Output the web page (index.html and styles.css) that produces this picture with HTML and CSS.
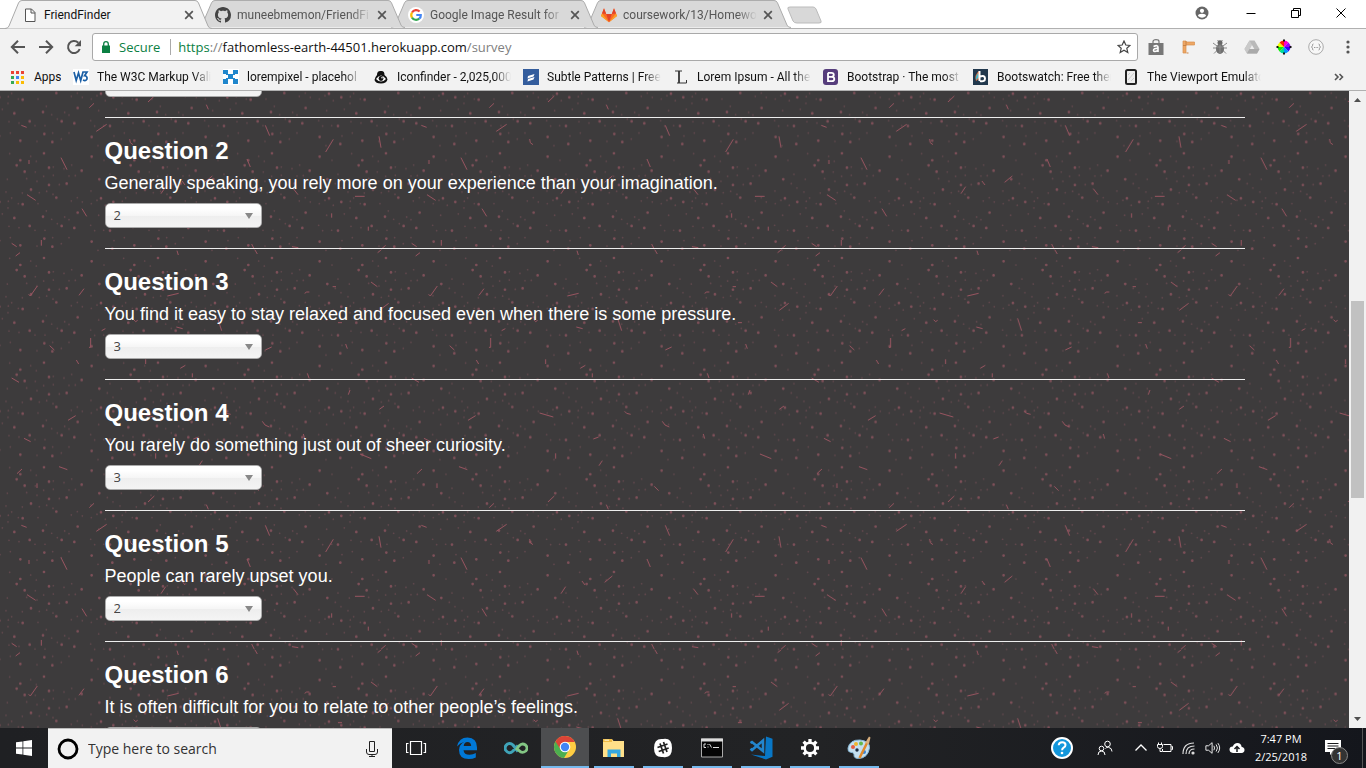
FILE: index.html
```html
<!DOCTYPE html>
<html lang="en">
<head>
<meta charset="utf-8">
<title>FriendFinder</title>
<link rel="stylesheet" href="styles.css">
</head>
<body>
<svg class="defs" aria-hidden="true">
  <defs>
    <symbol id="tab-shape" viewBox="0 0 207 29" preserveAspectRatio="none"><path d="M0 28.5Q3 28.500 4 26L13.500 3Q14.500 .5 17 .5H190Q192.500 .5 193.500 3L203 26Q204 28.500 207 28.500"/></symbol>
    <symbol id="x" viewBox="0 0 10 10"><path d="M1.200 1.200l7.600 7.600M8.800 1.200L1.200 8.800" fill="none" stroke="#555" stroke-width="1.700"/></symbol>
    <symbol id="caret" viewBox="0 0 8 6"><path d="M0 0h8L4 6z" fill="#888"/></symbol>
  </defs>
</svg>
<div class="desktop">
<header class="browser">
  <div class="tabstrip">
    <div class="tab active"><svg class="shape"><use href="#tab-shape"/></svg>
      <svg class="favicon" viewBox="0 0 16 16"><path d="M3.500 2h6l3.500 3.500V14.500H3.500zM9 2v4h4" fill="#fff" stroke="#555"/></svg>
      <span class="tab-title">FriendFinder</span><button class="plain" aria-label="Close tab"><svg class="close"><use href="#x"/></svg></button></div>
    <div class="tab"><svg class="shape"><use href="#tab-shape"/></svg>
      <svg class="favicon" viewBox="0 0 16 16"><path fill="#444" d="M8 0C3.580 0 0 3.580 0 8c0 3.540 2.290 6.530 5.470 7.590.4.070.55-.17.55-.38 0-.19-.01-.82-.01-1.490-2.010.37-2.530-.49-2.690-.94-.09-.23-.48-.94-.82-1.130-.28-.15-.68-.52-.01-.53.63-.01 1.080.58 1.230.82.72 1.210 1.870.87 2.330.66.07-.52.28-.87.51-1.070-1.780-.2-3.640-.89-3.640-3.950 0-.87.31-1.590.82-2.150-.08-.2-.36-1.020.08-2.120 0 0 .67-.21 2.200.82.64-.18 1.320-.27 2-.27s1.360.09 2 .27c1.530-1.040 2.200-.82 2.200-.82.44 1.100.16 1.920.08 2.120.51.56.82 1.270.82 2.150 0 3.070-1.870 3.750-3.650 3.950.29.25.54.73.54 1.480 0 1.070-.01 1.930-.01 2.200 0 .21.15.46.55.38A8.010 8.010 0 0016 8c0-4.420-3.580-8-8-8z"/></svg>
      <span class="tab-title">muneebmemon/FriendFi</span><button class="plain" aria-label="Close tab"><svg class="close"><use href="#x"/></svg></button></div>
    <div class="tab"><svg class="shape"><use href="#tab-shape"/></svg>
      <svg class="favicon" viewBox="0 0 16 16"><circle cx="8" cy="8" r="8" fill="#fff"/><g fill="none" stroke-width="2.200"><path d="M4 5.500A4.900 4.900 0 0 1 11.600 4.500" stroke="#ea4335"/><path d="M4 5.500A4.900 4.900 0 0 0 4 10.600" stroke="#fbbc05"/><path d="M4 10.600A4.900 4.900 0 0 0 11.200 11.700" stroke="#34a853"/><path d="M11.200 11.700Q13 10.300 12.800 8H8.300" stroke="#4285f4"/></g></svg>
      <span class="tab-title">Google Image Result for</span><button class="plain" aria-label="Close tab"><svg class="close"><use href="#x"/></svg></button></div>
    <div class="tab"><svg class="shape"><use href="#tab-shape"/></svg>
      <svg class="favicon" viewBox="0 0 16 16"><path fill="#fc6d26" d="M0 9L3 1.200 5.200 7h5.600L13 1.200 16 9l-8 6.200z"/><path fill="#e24329" d="M8 15.200L5.200 7h5.600z"/><path fill="#fca326" d="M0 9l1-2.500 7 8.700zM16 9l-1-2.500-7 8.700z"/><path fill="#e24329" d="M1 6.500L3 1.200l2.200 5.800zM15 6.500l-2-5.300L10.800 7z"/></svg>
      <span class="tab-title">coursework/13/Homewo</span><button class="plain" aria-label="Close tab"><svg class="close"><use href="#x"/></svg></button></div>
    <button class="plain newtab" aria-label="New tab"><svg viewBox="0 0 36 18"><path d="M3 1h23q2 0 3 2l5 12q1 2-2 2H10q-3 0-4-2L1 3q-1-2 2-2z" fill="#d8d8d8" stroke="#bbb"/></svg></button>
    <div class="window-controls">
      <button class="plain" aria-label="Profile"><svg viewBox="0 0 14 14"><circle cx="7" cy="7" r="6.500" fill="#666"/><circle cx="7" cy="4.800" r="2.100" fill="#fff"/><path d="M3 10q0-2.300 4-2.300T11 10q-4 3.500-8 0z" fill="#fff"/></svg></button>
      <button class="plain" aria-label="Minimize"><svg viewBox="0 0 14 14"><path d="M2.500 7.500h9" stroke="#000"/></svg></button>
      <button class="plain" aria-label="Restore"><svg viewBox="0 0 14 14"><path d="M2.500 4.500h7v7h-7zM4.500 4.500v-2h7v7h-2" fill="none" stroke="#000"/></svg></button>
      <button class="plain" aria-label="Close"><svg viewBox="0 0 14 14"><path d="M2.500 2.500l9 9M11.500 2.500l-9 9" stroke="#000"/></svg></button>
    </div>
  </div>
  <div class="toolbar">
    <div class="nav">
      <button class="plain" aria-label="Back"><svg viewBox="0 0 16 16"><path d="M15 8H2.500M8 1.700L1.800 8 8 14.300" fill="none" stroke="#555" stroke-width="2"/></svg></button>
      <button class="plain" aria-label="Forward"><svg viewBox="0 0 16 16"><path d="M1 8h12.500M8 1.700L14.200 8 8 14.300" fill="none" stroke="#555" stroke-width="2"/></svg></button>
      <button class="plain" aria-label="Reload"><svg viewBox="0 0 16 16"><path d="M13.700 10A6 6 0 1 1 12.300 3.800" fill="none" stroke="#555" stroke-width="2"/><path d="M15 1v6.300H8.700z" fill="#555"/></svg></button>
    </div>
    <div class="omnibox">
      <svg class="lock" viewBox="0 0 8 12"><path d="M0 4.500h8V12H0z" fill="#0b8043"/><path d="M1.700 5V3a2.300 2.300 0 0 1 4.600 0v2" fill="none" stroke="#0b8043" stroke-width="1.300"/></svg>
      <span class="secure">Secure</span>
      <a class="url" href="#survey"><span class="scheme">https</span><span class="dim">://</span>fathomless-earth-44501.herokuapp.com<span class="dim">/survey</span></a>
      <button class="plain" aria-label="Bookmark this page"><svg class="star" viewBox="0 0 14 14"><path d="M7 1l1.800 4 4.200.4-3.200 2.900 1 4.200L7 10.300l-3.800 2.200 1-4.200L1 5.400 5.200 5z" fill="none" stroke="#444" stroke-width="1.200"/></svg></button>
    </div>
    <div class="extensions">
      <button class="plain" aria-label="Shopping extension"><svg viewBox="0 0 16 16"><path d="M.5 4h15v12H.5z" fill="#777"/><path d="M5 4V2.500Q5 .7 8 .7t3 1.800V4" fill="none" stroke="#777" stroke-width="1.200"/><path d="M5.500 7.500Q10 5.500 10 8.200V13M10 9.500Q5.500 9 5.500 11.300t4.500.2" fill="none" stroke="#fff" stroke-width="1.600"/></svg></button>
      <button class="plain" aria-label="Ruler extension"><svg viewBox="0 0 16 16"><path d="M3 2v12h3V6h8.500V3H6V2z" fill="#eda765" stroke="#d8904f" stroke-width=".7"/><path d="M6 2v4.500M3 6.500H6M6.500 14h2" stroke="#c98245"/></svg></button>
      <button class="plain" aria-label="Bug extension"><svg viewBox="0 0 16 16"><path d="M1 4l4 3M15 4l-4 3M1 9h14M2 14.500l4-4M14 14.500l-4-4M5.500 1L8 4l2.500-3" fill="none" stroke="#888"/><circle cx="8" cy="3.800" r="2.500" fill="#666"/><ellipse cx="8" cy="10" rx="4" ry="5" fill="#707070"/><path d="M8 6v8M5 8h6" stroke="#999" stroke-width=".7"/></svg></button>
      <button class="plain" aria-label="Drive extension"><svg viewBox="0 0 16 16"><path d="M5.500 1.500h5L15.500 10 13 14.500H3L.5 10z" fill="#b9b9b9"/><path d="M5.500 1.500L.5 10 3 14.500l5-8.500z" fill="#c9c9c9"/><path d="M3 14.500L5.500 10h10L13 14.500z" fill="#aaa"/><path d="M8 6l-2.200 4h4.500z" fill="#eee"/></svg></button>
      <button class="plain" aria-label="Color extension"><svg viewBox="0 0 16 16"><path d="M8 8V1.500q2.700 0 4.500 2z" fill="#f0c"/><path d="M8 8l4.500-4.500Q14.500 5.500 14.500 8z" fill="#90f"/><path d="M8 8h6.500q0 2.700-2 4.500z" fill="#30f"/><path d="M8 8l4.500 4.500Q10.500 14.500 8 14.500z" fill="#09f"/><path d="M8 8v6.500q-2.700 0-4.500-2z" fill="#0d9"/><path d="M8 8l-4.500 4.500Q1.500 10.500 1.500 8z" fill="#1e0"/><path d="M8 8H1.500q0-2.700 2-4.500z" fill="#ef0"/><path d="M8 8L3.500 3.500Q5.500 1.500 8 1.500z" fill="#f20"/><path d="M8 .5v2M8 13.500v2M.5 8h2M13.500 8h2" stroke="#111" stroke-width="2"/></svg></button>
      <button class="plain" aria-label="JSON extension"><svg viewBox="0 0 16 16"><circle cx="8" cy="8" r="7.300" fill="#f7f7f7" stroke="#aaa"/><path d="M5.500 5q-1.500 0-1 1.800L3.500 8l1 1.200Q4 11 5.500 11M10.500 5q1.500 0 1 1.800l1 1.200-1 1.200q.5 1.800-1 1.800M6 8.500h1M7.600 8.500h1M9.200 8.500h1" fill="none" stroke="#999"/></svg></button>
      <button class="plain" aria-label="Menu"><svg viewBox="0 0 16 16" fill="#555"><circle cx="8" cy="3" r="1.600"/><circle cx="8" cy="8" r="1.600"/><circle cx="8" cy="13" r="1.600"/></svg></button>
    </div>
  </div>
  <nav class="bookmarks">
    <a class="apps" href="#apps"><svg viewBox="0 0 16 16"><path d="M1 2h3v3H1zM6 2h3v3H6zM11 2h3v3h-3z" fill="#ea4335"/><path d="M1 7h3v3H1z" fill="#34a853"/><path d="M6 7h3v3H6z" fill="#4285f4"/><path d="M11 7h3v3h-3zM6 12h3v3H6zM11 12h3v3h-3z" fill="#fbbc05"/><path d="M1 12h3v3H1z" fill="#34a853"/></svg><span>Apps</span></a>
    <a href="#w3c"><svg viewBox="0 0 16 16"><path d="M0 0h16v16H0z" fill="#fff"/><path d="M1 3l2.200 8.500L5.500 4l2.200 7.500L10 3h4l-2.500 3.700q3 .3 2.500 3.200-1 2.600-4 1.200" fill="none" stroke="#1b5fa5" stroke-width="1.700"/></svg><span>The W3C Markup Vali</span></a>
    <a href="#lorempixel"><svg viewBox="0 0 16 16"><path d="M0 0h16v16H0z" fill="#fff"/><path d="M0 1h5v4H0zM10 1h5v4h-5zM5 5h5v5H5zM0 10h5v5H0zM10 10h5v5h-5zM3 4h2v2H3zM10 4h2v2h-2zM3 9h2v2H3zM10 9h2v2h-2z" fill="#1f86cc"/></svg><span>lorempixel - placehol</span></a>
    <a href="#iconfinder"><svg viewBox="0 0 16 16"><path d="M4 6Q4 1.500 8 2q3.500-.5 3.500 4 3 2 3 4.500-1 4-6.500 4T1.500 11Q2 8 4 6z" fill="#111"/><path d="M3 10q5-7 10 0-5 5-10 0z" fill="#fff"/><circle cx="8" cy="9.500" r="2.400" fill="#111"/><circle cx="9" cy="8.700" r=".8" fill="#fff"/></svg><span>Iconfinder - 2,025,000</span></a>
    <a href="#patterns"><svg viewBox="0 0 16 16"><path d="M0 0h16v16H0z" fill="#345d9d"/><path d="M5 7l6.500-2-1 2.500-6 2zM5 10l6.500-2-1 2.500-6 2z" fill="#fff"/></svg><span>Subtle Patterns | Free</span></a>
    <a href="#lipsum"><svg viewBox="0 0 16 16"><path d="M2 2h7M4 14h9.500v-3" fill="none" stroke="#333"/><path d="M6 2v12" stroke="#333" stroke-width="1.800"/></svg><span>Lorem Ipsum - All the</span></a>
    <a href="#bootstrap"><svg viewBox="0 0 16 16"><rect width="15" height="16" rx="3" fill="#563d7c"/><path d="M5 3.800h3.500q2.300 0 2.300 2T8.500 7.800H5m0 0h3.800q2.500 0 2.500 2.200t-2.500 2.200H5V3.800" fill="none" stroke="#fff" stroke-width="1.800"/></svg><span>Bootstrap · The most</span></a>
    <a href="#bootswatch"><svg viewBox="0 0 16 16"><path d="M0 0h15v16H0z" fill="#21384d"/><path d="M6 2q-5 4-3 10l4-3z" fill="#e96b35"/><path d="M5 4q-3 4-2 7l3-3z" fill="#49b6c8"/><path d="M6.500 2v10M7 7.500q5-1.500 5 2T7 12" fill="none" stroke="#fff" stroke-width="2"/></svg><span>Bootswatch: Free ther</span></a>
    <a href="#viewport"><svg viewBox="0 0 16 16"><rect x="3" y="1" width="10" height="14" rx="1.500" fill="#eee" stroke="#222" stroke-width="2"/><path d="M5 11l6-7M5 6l2-2M8 12l3-3" stroke="#ccc"/></svg><span>The Viewport Emulato</span></a>
    <button class="plain more" aria-label="More bookmarks"><svg viewBox="0 0 10 8"><path d="M1 1l3 3-3 3M5.500 1l3 3-3 3" fill="none" stroke="#555" stroke-width="1.600"/></svg></button>
  </nav>
</header>

<div class="viewport">
  <main class="page">
    <svg class="speckles" aria-hidden="true">
      <defs>
        <pattern id="dots" patternUnits="userSpaceOnUse" width="342" height="314" patternTransform="translate(88 164) scale(.3333)">
          <path fill="none" stroke="#9c5966" stroke-width="8" stroke-linecap="round" opacity=".7" d="M11 19h0M39 144h0M76 155h0M34 87h0M128 45h0M139 30h0M152 64h0M171 118h0M225 52h0M225 104h0M210 9h0M278 100h0M247 142h0M323 61h0M311 187h0M146 162h0M207 199h0M121 203h0M167 227h0M66 241h0M263 227h0M301 233h0M235 289h0M211 265h0M139 285h0M73 295h0M11 274h0"/>
          <path fill="none" stroke="#9c5966" stroke-width="5" stroke-linecap="round" opacity=".4" d="M48 30h0M107 10h0M170 18h0M187 33h0M66 72h0M58 100h0M100 87h0M9 122h0M75 113h0M96 125h0M113 143h0M145 128h0M189 93h0M158 85h0M184 65h0M238 50h0M209 78h0M256 103h0M285 77h0M304 76h0M293 44h0M270 55h0M238 75h0M218 123h0M196 127h0M237 132h0M292 152h0M272 200h0M10 160h0M27 150h0M85 191h0M52 165h0M103 153h0M133 160h0M192 160h0M217 182h0M233 207h0M183 240h0M250 220h0M285 208h0M325 155h0M310 142h0M32 195h0M102 173h0M47 240h0M20 241h0M8 225h0M105 228h0M135 232h0M213 240h0M236 262h0M189 287h0M262 280h0M285 262h0M78 271h0M109 262h0M30 300h0"/>
        </pattern>
        <pattern id="dashes" patternUnits="userSpaceOnUse" width="1200" height="1200" patternTransform="translate(0 159) scale(.3333)">
          <path fill="none" stroke="#995460" stroke-width="3" d="M47 18L60 8M531 2l4 13M765 0l7 12M1133 8l10-8M86 133l5 5 21-30M237 136l15-20M502 138l34-8M998 110h10M914 130l6-4h8M1113 96l19 14M1138 181l28-21M401 209l6 6 6-4M653 205l12 37M1014 218h12M305 242l11-6M529 231l19 5M272 264v28h-5M149 287l14 13M1037 282l5 14M796 300l19-9M229 330l7 12M437 328v14M541 355l15-9M577 370v12M922 370l5 14M35 384l22 13M1050 420l-5 14M1138 478l14-10M204 511l23-14M419 489l41 12M674 484l6 6 12 3M787 514l8 11 13 6M72 565l20 10M580 567l16-6M910 552l4 14M467 610v16M1080 612l34 14M607 632l-10 15M51 671l15-14M177 650l25 9M111 700v14M763 709l13 13M444 756l19-18M268 773l14-13M619 764l6 14M64 826l16 6M289 844l31-21M796 826l13 31M389 867l2 11 8 6M1000 868l-23 38M1137 859l6 34M183 923l18 36M87 930v12M741 927l10 24M614 997l23-19M546 993l9 12M483 1031l14-21M81 1034l26 17M880 1016l14 18M1065 1039h29M246 1076l14 23M995 1090v13M1105 1130v12M124 1170v17M35 1180l15 10M755 1182l8 16M876 1190l19 3M1143 1198l14-12"/>
        </pattern>
      </defs>
      <rect width="100%" height="100%" fill="url(#dots)"/>
      <rect width="100%" height="100%" fill="url(#dashes)"/>
    </svg>
    <form class="survey" id="survey">
      <section class="question first"><div class="chosen"><select aria-label="Question 1"><option>1</option></select></div></section>
      <section class="question"><h3>Question 2</h3><label for="q2">Generally speaking, you rely more on your experience than your imagination.</label><div class="chosen"><select id="q2"><option>2</option></select><svg><use href="#caret"/></svg></div></section>
      <section class="question"><h3>Question 3</h3><label for="q3">You find it easy to stay relaxed and focused even when there is some pressure.</label><div class="chosen"><select id="q3"><option>3</option></select><svg><use href="#caret"/></svg></div></section>
      <section class="question"><h3>Question 4</h3><label for="q4">You rarely do something just out of sheer curiosity.</label><div class="chosen"><select id="q4"><option>3</option></select><svg><use href="#caret"/></svg></div></section>
      <section class="question"><h3>Question 5</h3><label for="q5">People can rarely upset you.</label><div class="chosen"><select id="q5"><option>2</option></select><svg><use href="#caret"/></svg></div></section>
      <section class="question"><h3>Question 6</h3><label for="q6">It is often difficult for you to relate to other people’s feelings.</label><div class="chosen"><select id="q6"><option>1</option></select></div></section>
    </form>
  </main>
  <div class="scrollbar">
    <svg viewBox="0 0 17 17"><path d="M5 11h7L8.500 7z" fill="#505050"/></svg>
    <div class="track"><div class="thumb"></div></div>
    <svg viewBox="0 0 17 17"><path d="M5 6h7l-3.500 4z" fill="#505050"/></svg>
  </div>
</div>

<footer class="taskbar">
  <button class="plain start" aria-label="Start"><svg viewBox="0 0 16 16" fill="#fff"><path d="M0 2.300l6.500-.9v6.100H0zM7.300 1.300L16 0v7.500H7.300zM0 8.400h6.500v6.200L0 13.700zM7.300 8.400H16V16l-8.700-1.300z"/></svg></button>
  <div class="search">
    <svg class="cortana" viewBox="0 0 22 22"><circle cx="11" cy="11" r="9" fill="none" stroke="#000" stroke-width="2.800"/></svg>
    <input type="text" placeholder="Type here to search" aria-label="Type here to search">
    <svg class="mic" viewBox="0 0 12 16"><path d="M3.500.5h5v10h-5zM.5 8v3q0 2.500 2.500 2.500h6q2.500 0 2.500-2.500V8M6 13.500v2M3 15.500h6" fill="none" stroke="#222"/></svg>
  </div>
  <div class="apps-row">
    <button class="plain app" aria-label="Task view"><svg viewBox="0 0 24 24"><path d="M4.500 5.500h11v13h-11zM2.500 7.500h-2v9h2M17.500 7.500h2v9h-2" fill="none" stroke="#fff" stroke-width="1.200"/></svg></button>
    <button class="plain app" aria-label="Edge"><svg viewBox="0 0 24 24"><path fill="#0078d7" d="M2 10.500Q4 1.500 12.500 1.500 22 2 22 11.500v2.700H8.500q.5 4.500 6 4.500 3.700 0 6.300-1.700v4.500q-3.200 1.500-7 1.500Q4 23 4 14q0-5.500 5.500-8.200Q5 7 2 10.500zM8.700 10h7.500q-.3-4-3.700-4-3.300 0-3.800 4z"/></svg></button>
    <button class="plain app" aria-label="Infinity"><svg viewBox="0 0 24 24"><path d="M14 15.500L9 9Q6.500 6.500 3.500 8 0 10.500 1.500 14q3.500 5 7.500 1l5-5.500" fill="none" stroke="#3fa3b8" stroke-width="3"/><path d="M12 14l3-4q3-3.500 6.500-1 3 3 .3 6-3.800 3-6.800-.5l-2-2.500" fill="none" stroke="#83c684" stroke-width="2.800"/></svg></button>
    <button class="plain app current" aria-label="Chrome"><svg viewBox="0 0 24 24"><circle cx="12" cy="12" r="11" fill="#ffcd42"/><path d="M12 12L2.500 6.500A11 11 0 0 0 11 23l5.500-9z" fill="#4caf50"/><path d="M12 7h9.800A11 11 0 0 0 2.500 6.500l5 8z" fill="#db4437"/><circle cx="12" cy="12" r="5.300" fill="#fff"/><circle cx="12" cy="12" r="4.200" fill="#4285f4"/></svg></button>
    <button class="plain app open" aria-label="File Explorer"><svg viewBox="0 0 24 24"><path d="M1 3h9l1.500 2H22v16H1z" fill="#ffe089"/><path d="M1 3h9v3H1z" fill="#eebb46"/><path d="M2.500 4.200H7" stroke="#fff7d8"/><path d="M5.500 21v-7.500h13V21H15v-3.500H9V21z" fill="#35a7df"/></svg></button>
    <button class="plain app open" aria-label="Slack"><svg viewBox="0 0 24 24"><path d="M12 3Q21 1.500 21 12t-9 9Q3 22 3 12t9-9z" fill="#fff"/><path d="M9 7.500l3.500 10M12.500 6l3.500 10M6.500 11.500l10-3.500M7.700 15.500l10-3.500" stroke="#222" stroke-width="1.700"/></svg></button>
    <button class="plain app open" aria-label="Command Prompt"><svg viewBox="0 0 24 24"><path d="M1.500 3h21v18h-21z" fill="#050505" stroke="#aaa"/><path d="M1 2.500h22v3H1z" fill="#ddd"/><path d="M6 8H4v3.500h2M8 8v1M8 10.500v1M9.500 8l2 3.500M13 11.500h6" fill="none" stroke="#ddd"/></svg></button>
    <button class="plain app open" aria-label="Visual Studio Code"><svg viewBox="0 0 24 24"><path d="M17 .5l6.500 2.200v18L17 23.500 2 18.500l14 1.500z" fill="#0877c6"/><path d="M1.500 7L3 6l11 9V4.500L3 14l-1.500-1.200" fill="none" stroke="#2386ce" stroke-width="2.500"/></svg></button>
    <button class="plain app open" aria-label="Settings"><svg viewBox="0 0 24 24"><circle cx="12" cy="12" r="5.300" fill="none" stroke="#fff" stroke-width="2.500"/><path d="M12 3v3.500M12 17.500V21M3 12h3.500M17.500 12H21M5.600 5.600L8 8M16 16l2.400 2.400M18.400 5.600L16 8M8 16l-2.400 2.400" stroke="#fff" stroke-width="3.300"/></svg></button>
    <button class="plain app open" aria-label="Paint"><svg viewBox="0 0 24 24"><path d="M1 12Q3 3.500 13 4q10 1 9.500 8-1.500 10-11 10.500-5 0-4.500-4-.5-2.500-3.500-2.200Q.5 16 1 12z" fill="#c4dff0" stroke="#86b7d5"/><circle cx="6" cy="11" r="2" fill="#e85b40"/><circle cx="9" cy="8" r="2" fill="#efb52c"/><circle cx="14" cy="7.500" r="2" fill="#63b84a"/><circle cx="10" cy="14" r="1.700" fill="#1c2c40"/><circle cx="17" cy="16" r="2" fill="#3c82d0"/><path d="M12.500 22L20 7" stroke="#e08a2c" stroke-width="2.500"/><path d="M18 7l4-6.500 1.500 1L22 8z" fill="#d7ae7c"/></svg></button>
  </div>
  <div class="tray">
    <svg class="help" viewBox="0 0 22 22"><circle cx="11" cy="11" r="10" fill="#1296db" stroke="#fff" stroke-width="2"/><path d="M7.700 8.300q.2-3 3.500-3t3.300 2.700q0 1.500-1.900 2.700-1.500 1-1.500 2.500" fill="none" stroke="#fff" stroke-width="2"/><circle cx="11" cy="16" r="1.300" fill="#fff"/></svg>
    <svg class="people" viewBox="0 0 16 16" fill="none" stroke="#fff"><circle cx="10.500" cy="4" r="2.800"/><circle cx="4.500" cy="8.500" r="2.300"/><path d="M1 15q0-4 3.500-4T8 15M8.500 8.500q1-1.500 3-1.200Q15 8 15 11.500"/></svg>
    <svg viewBox="0 0 16 16"><path d="M2.500 10.500L8 5l5.500 5.500" fill="none" stroke="#fff" stroke-width="1.300"/></svg>
    <svg viewBox="0 0 16 16" fill="none" stroke="#fff"><path d="M6.500 4.500h7.500v7H5.500V9M14.500 6.500h1v3h-1M.5 4.500h5v2q0 2-2.500 2t-2.500-2zM1.500 4V2.500M4.500 4V2.500M3 8.500v3h2"/></svg>
    <svg viewBox="0 0 16 16" fill="none" stroke="#ddd" stroke-width="1.200"><path d="M2 14Q2 3 13 3M5 14q0-8 8.500-8M8 14q0-5 5.500-5"/><circle cx="12" cy="13" r="1" fill="#fff"/></svg>
    <svg viewBox="0 0 18 16" fill="none" stroke="#fff"><path d="M1 5.500h3l4-3.500v12l-4-3.500H1zM10 5.500q1.500 2.500 0 5M12.500 4q3 4 0 8M14.500 2.500q4 5.500 0 11"/></svg>
    <svg viewBox="0 0 16 16"><path d="M4 13Q.5 12.500.5 9.500t3.300-3Q5 3 8.500 3t4.200 4Q15.500 7.300 15.500 10T12.500 13z" fill="#fff"/><path d="M8 12V7M5.500 9L8 6.500 10.500 9" fill="none" stroke="#1a1b1e" stroke-width="1.500"/></svg>
    <div class="clock"><time>7:47 PM</time><span>2/25/2018</span></div>
    <button class="plain notices" aria-label="Notifications"><svg viewBox="0 0 18 16"><path d="M1 0h16v12H9l-3 3v-3H1z" fill="#fff"/><path d="M3.500 3.500h11M3.500 6h11M3.500 8.500H11" stroke="#1a1b1e"/></svg><span class="badge">1</span></button>
  </div>
</footer>
</div>
</body>
</html>
```
FILE: styles.css
```css
* { box-sizing: border-box; }
body { margin: 0; font-family: "Open Sans", "Noto Sans", sans-serif; font-size: 12px; color: #111; }
svg { display: block; flex: none; }
.defs { position: absolute; width: 0; height: 0; }
.plain { display: flex; align-items: center; justify-content: center; padding: 0; border: 0; background: none; flex: none; }
.desktop { display: flex; flex-direction: column; height: 100vh; overflow: hidden; }

.browser { flex: none; background: #f2f2f2; border-bottom: 1px solid #b0b0b0; }
.tabstrip { display: flex; height: 29px; padding-left: 5px; background: #fff; border-bottom: 1px solid #b0b0b0; font-family: Roboto, "Open Sans", sans-serif; }
.tab { position: relative; display: flex; align-items: center; gap: 6px; flex: 0 1 207px; min-width: 0; height: 29px; margin-right: -14px; padding: 0 18px 0 17px; color: #555; z-index: 1; }
.tab:nth-child(1) { z-index: 4; }
.tab:nth-child(2) { z-index: 3; }
.tab:nth-child(3) { z-index: 2; }
.tab .shape { position: absolute; inset: 0; z-index: -1; width: 100%; height: 29px; fill: #d9d9d9; stroke: #aaa; }
.tab.active { color: #111; }
.tab.active .shape { fill: #f2f2f2; }
.tab:not(.active) .shape { height: 28px; }
.favicon { width: 16px; height: 16px; }
.tab-title { flex: 1; min-width: 0; overflow: hidden; white-space: nowrap; -webkit-mask-image: linear-gradient(90deg, #000 85%, transparent); mask-image: linear-gradient(90deg, #000 85%, transparent); }
.tab.active .tab-title { -webkit-mask-image: none; mask-image: none; }
.close { width: 10px; height: 10px; }
.newtab { align-self: flex-start; margin: 6px 0 0 10px; }
.newtab svg { width: 36px; height: 18px; }
.window-controls { display: flex; flex: none; gap: 31px; height: 26px; margin-left: auto; padding-right: 18px; }
.window-controls svg { width: 14px; height: 14px; }
.window-controls button:first-child { margin-right: 4px; }

.toolbar { display: flex; align-items: center; height: 36px; padding: 0 10px; }
.nav { display: flex; gap: 12px; width: 82px; }
.nav svg { width: 16px; height: 16px; }
.omnibox { display: flex; align-items: center; flex: 1; min-width: 0; height: 28px; padding: 0 6px 0 9px; background: #fff; border: 1px solid #a9a9a9; border-radius: 3px; font-size: 13px; }
.lock { width: 8px; height: 12px; margin-right: 9px; }
.secure { padding-right: 10px; border-right: 1px solid #aaa; color: #0b8043; line-height: 16px; }
.url { flex: 1; min-width: 0; padding-left: 7px; overflow: hidden; color: #111; text-decoration: none; white-space: nowrap; }
.scheme { color: #0b8043; }
.dim { color: #808080; }
.star { width: 14px; height: 14px; }
.extensions { display: flex; gap: 16px; padding-left: 10px; }
.extensions svg { width: 16px; height: 16px; }
.bookmarks { display: flex; align-items: center; gap: 12px; height: 25px; padding: 0 22px 2px 10px; overflow: hidden; font-family: Roboto, "Open Sans", sans-serif; }
.bookmarks a { display: flex; align-items: center; gap: 8px; flex: none; width: 138px; color: #111; text-decoration: none; white-space: nowrap; }
.bookmarks a svg { width: 16px; height: 16px; }
.bookmarks a span { flex: 1; min-width: 0; overflow: hidden; -webkit-mask-image: linear-gradient(90deg, #000 85%, transparent); mask-image: linear-gradient(90deg, #000 85%, transparent); }
.bookmarks .apps { width: 51px; }
.bookmarks .apps span { -webkit-mask-image: none; mask-image: none; }
.bookmarks .more { margin-left: auto; }
.more svg { width: 10px; height: 8px; }

.viewport { display: flex; flex: 1; min-height: 0; }
.page { position: relative; flex: 1; min-width: 0; overflow: hidden; background: #3d3b3c; color: #fff; font-family: "Liberation Sans", Arial, sans-serif; }
.speckles { position: absolute; inset: 0; width: 100%; height: 100%; }
.survey { position: relative; max-width: 1170px; margin: -19px auto 0; padding: 0 15px; }
.question { display: flex; flex-direction: column; padding: 20px 0; border-top: 1px solid #eee; }
.question.first { padding-top: 0; border-top: 0; }
h3 { margin: 0 0 6px; font-size: 24px; line-height: 26px; }
label { margin-bottom: 7px; font-size: 18px; line-height: 26px; }
.chosen { display: grid; width: 157px; height: 25px; align-items: center; }
.chosen select { grid-area: 1 / 1; width: 100%; height: 25px; padding: 0 8px 2px; appearance: none; border: 1px solid #aaa; border-radius: 5px; background: linear-gradient(#fff 20%, #f6f6f6 50%, #eee 52%, #f4f4f4); color: #444; font: 13px "Open Sans", sans-serif; }
.chosen svg { grid-area: 1 / 1; justify-self: end; width: 8px; height: 6px; margin-right: 9px; pointer-events: none; }
.scrollbar { display: flex; flex-direction: column; flex: none; width: 17px; background: #f1f1f1; }
.scrollbar svg { width: 17px; height: 17px; }
.track { display: flex; flex: 1; justify-content: center; padding-top: 193px; }
.thumb { width: 13px; height: 197px; background: #c1c1c1; }

.taskbar { display: flex; flex: none; height: 40px; background: linear-gradient(90deg, #1f2023, #222325 60%, #14161c); color: #fff; }
.start { width: 48px; }
.start svg { width: 16px; height: 16px; }
.search { display: flex; align-items: center; flex: 0 1 344px; padding: 0 14px 0 9px; border-top: 1px solid #bbb; background: #f2f2f2; }
.cortana { width: 22px; height: 22px; }
.search input { flex: 1; min-width: 0; padding: 0 9px; border: 0; background: none; color: #222; font: 14px "Open Sans", sans-serif; }
.search input::placeholder { color: #333; opacity: 1; }
.mic { width: 12px; height: 16px; }
.apps-row { display: flex; gap: 1px; padding-left: 2px; }
.app { position: relative; width: 48px; height: 40px; }
.app svg { width: 24px; height: 24px; }
.current { background: #4d4e50; border-bottom: 2px solid #76b9ed; }
.open::after { content: ""; position: absolute; bottom: 0; left: 4px; width: 40px; height: 2px; background: #76b9ed; }
.tray { display: flex; align-items: center; gap: 8px; margin-left: auto; margin-right: 3px; padding-right: 20px; border-right: 1px solid #555; }
.tray > svg { width: 16px; height: 16px; }
.tray .help { width: 22px; height: 22px; margin-right: 16px; }
.tray .people { margin-right: 12px; }
.clock { display: flex; flex-direction: column; align-items: center; width: 56px; font-size: 11px; line-height: 18px; }
.notices { position: relative; margin-left: 7px; color: #fff; }
.notices svg { width: 18px; height: 16px; }
.badge { position: absolute; top: 7px; left: 7px; width: 17px; height: 17px; border: 1px solid #888; border-radius: 50%; background: #333; font: 11px/15px "Open Sans", sans-serif; text-align: center; }
```
